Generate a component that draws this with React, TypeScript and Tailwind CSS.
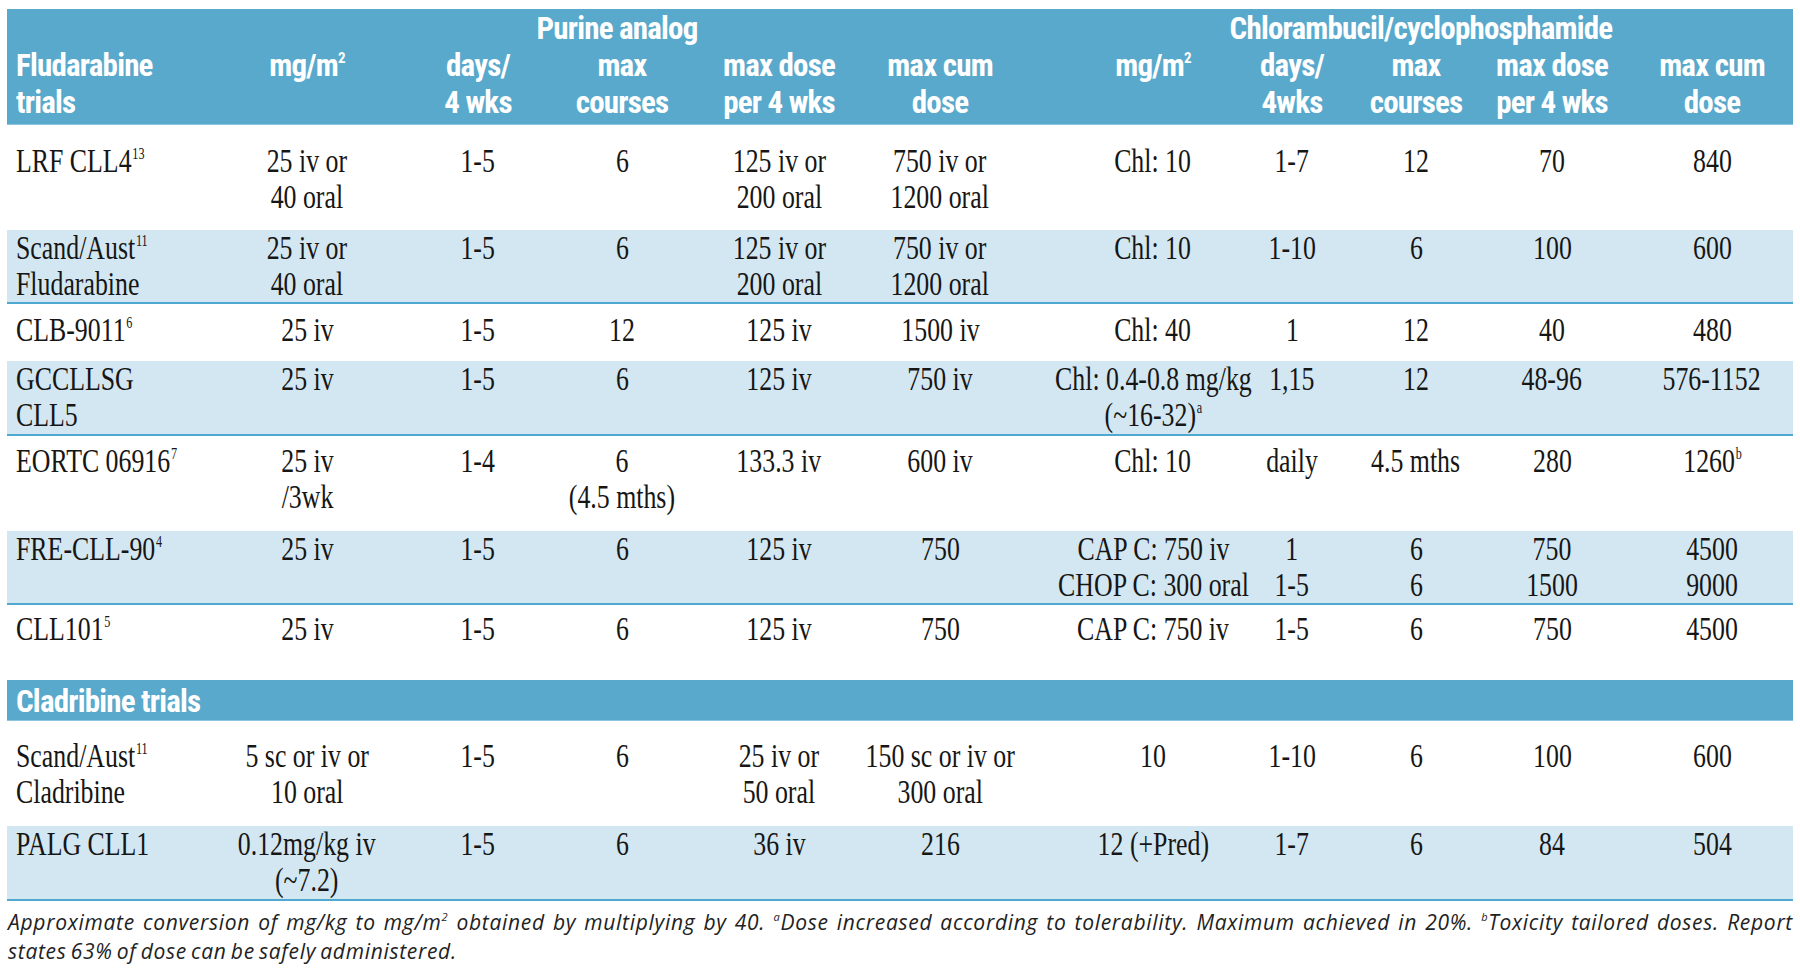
import React from "react";

type Line = React.ReactNode;

interface Row {
  cells: Line[][];
  shaded: boolean;
  height: string;
  pad: string;
}

// column tracks, and the small nudges that put each column's text on the printed centre line
const grid =
  "grid grid-cols-[214px_172px_157px_149px_160px_188px_176px_131px_130px_147px_1fr]";
const nudge = [
  "justify-start pl-[9px]",
  "justify-center",
  "justify-center pl-[13px]",
  "justify-center pr-[5px]",
  "justify-center",
  "justify-center pr-[26px]",
  "justify-center pl-[36px]",
  "justify-center pl-[7px]",
  "justify-center pr-[6px]",
  "justify-center pr-[11px]",
  "justify-center",
];

const Sup = ({ children }: { children: React.ReactNode }) => (
  <sup className="text-[16px] top-[-13px] ml-[1px]">{children}</sup>
);

const fludarabine: Row[] = [
  {
    shaded: false,
    height: "h-[105px]",
    pad: "pt-[18px]",
    cells: [
      [<>LRF CLL4<Sup>13</Sup></>],
      ["25 iv or", "40 oral"],
      ["1-5"],
      ["6"],
      ["125 iv or", "200 oral"],
      ["750 iv or", "1200 oral"],
      ["Chl: 10"],
      ["1-7"],
      ["12"],
      ["70"],
      ["840"],
    ],
  },
  {
    shaded: true,
    height: "h-[74px]",
    pad: "pt-0",
    cells: [
      [<>Scand/Aust<Sup>11</Sup></>, "Fludarabine"],
      ["25 iv or", "40 oral"],
      ["1-5"],
      ["6"],
      ["125 iv or", "200 oral"],
      ["750 iv or", "1200 oral"],
      ["Chl: 10"],
      ["1-10"],
      ["6"],
      ["100"],
      ["600"],
    ],
  },
  {
    shaded: false,
    height: "h-[57px]",
    pad: "pt-[8px]",
    cells: [
      [<>CLB-9011<Sup>6</Sup></>],
      ["25 iv"],
      ["1-5"],
      ["12"],
      ["125 iv"],
      ["1500 iv"],
      ["Chl: 40"],
      ["1"],
      ["12"],
      ["40"],
      ["480"],
    ],
  },
  {
    shaded: true,
    height: "h-[75px]",
    pad: "pt-0",
    cells: [
      ["GCCLLSG", "CLL5"],
      ["25 iv"],
      ["1-5"],
      ["6"],
      ["125 iv"],
      ["750 iv"],
      ["Chl: 0.4-0.8 mg/kg", <>(~16-32)<Sup>a</Sup></>],
      ["1,15"],
      ["12"],
      ["48-96"],
      ["576-1152"],
    ],
  },
  {
    shaded: false,
    height: "h-[95px]",
    pad: "pt-[7px]",
    cells: [
      [<>EORTC 06916<Sup>7</Sup></>],
      ["25 iv", "/3wk"],
      ["1-4"],
      ["6", "(4.5 mths)"],
      ["133.3 iv"],
      ["600 iv"],
      ["Chl: 10"],
      ["daily"],
      ["4.5 mths"],
      ["280"],
      [<>1260<Sup>b</Sup></>],
    ],
  },
  {
    shaded: true,
    height: "h-[74px]",
    pad: "pt-0",
    cells: [
      [<>FRE-CLL-90<Sup>4</Sup></>],
      ["25 iv"],
      ["1-5"],
      ["6"],
      ["125 iv"],
      ["750"],
      ["CAP C: 750 iv", "CHOP C: 300 oral"],
      ["1", "1-5"],
      ["6", "6"],
      ["750", "1500"],
      ["4500", "9000"],
    ],
  },
  {
    shaded: false,
    height: "h-[75px]",
    pad: "pt-[6px]",
    cells: [
      [<>CLL101<Sup>5</Sup></>],
      ["25 iv"],
      ["1-5"],
      ["6"],
      ["125 iv"],
      ["750"],
      ["CAP C: 750 iv"],
      ["1-5"],
      ["6"],
      ["750"],
      ["4500"],
    ],
  },
];

const cladribine: Row[] = [
  {
    shaded: false,
    height: "h-[105px]",
    pad: "pt-[17px]",
    cells: [
      [<>Scand/Aust<Sup>11</Sup></>, "Cladribine"],
      ["5 sc or iv or", "10 oral"],
      ["1-5"],
      ["6"],
      ["25 iv or", "50 oral"],
      ["150 sc or iv or", "300 oral"],
      ["10"],
      ["1-10"],
      ["6"],
      ["100"],
      ["600"],
    ],
  },
  {
    shaded: true,
    height: "h-[75px]",
    pad: "pt-0",
    cells: [
      ["PALG CLL1"],
      ["0.12mg/kg iv", "(~7.2)"],
      ["1-5"],
      ["6"],
      ["36 iv"],
      ["216"],
      ["12 (+Pred)"],
      ["1-7"],
      ["6"],
      ["84"],
      ["504"],
    ],
  },
];

const heads: Line[][] = [
  ["Fludarabine", "trials"],
  [<>mg/m<sup className="text-[15px] top-[-13px]">2</sup></>],
  ["days/", "4 wks"],
  ["max", "courses"],
  ["max dose", "per 4 wks"],
  ["max cum", "dose"],
  [<>mg/m<sup className="text-[15px] top-[-13px]">2</sup></>],
  ["days/", "4wks"],
  ["max", "courses"],
  ["max dose", "per 4 wks"],
  ["max cum", "dose"],
];

const headFont =
  "[font-family:'Roboto_Condensed','Open_Sans',sans-serif] font-bold text-white text-[31px] leading-[37px] tracking-[-0.8px]";

function BodyRow({ row }: { row: Row }) {
  return (
    <div
      className={`${grid} ${row.height} ${row.pad} ${
        row.shaded ? "bg-[#d3e7f3] border-b-2 border-[#4ea8d0]" : "bg-white"
      }`}
    >
      {row.cells.map((lines, i) => (
        <div key={i} className={`flex min-w-0 ${nudge[i]}`}>
          <div
            className={`flex flex-col whitespace-nowrap scale-x-[0.76] ${
              i === 0 ? "items-start origin-left" : "items-center"
            }`}
          >
            {lines.map((line, j) => (
              <div key={j} className="h-[36px]">
                {line}
              </div>
            ))}
          </div>
        </div>
      ))}
    </div>
  );
}

const Note = ({ children }: { children: React.ReactNode }) => (
  <sup className="text-[11px] top-[-9px]">{children}</sup>
);

export default function App() {
  return (
    <div className="min-h-[979px] bg-white pt-[9px]">
      <div className="mx-[7px]">
        <div className={`bg-[#59a9cc] h-[116px] pt-[1px] border-b border-[#8ac4de] ${headFont}`}>
          <div className={grid}>
            <div className="col-start-4 flex min-w-0 justify-center pr-[15px] whitespace-nowrap">
              Purine analog
            </div>
            <div className="col-start-9 flex min-w-0 justify-center pl-[4px] whitespace-nowrap">
              Chlorambucil/cyclophosphamide
            </div>
          </div>
          <div className={grid}>
            {heads.map((lines, i) => (
              <div key={i} className={`flex min-w-0 ${nudge[i]}`}>
                <div
                  className={`flex flex-col whitespace-nowrap ${
                    i === 0 ? "items-start" : "items-center"
                  }`}
                >
                  {lines.map((line, j) => (
                    <div key={j}>{line}</div>
                  ))}
                </div>
              </div>
            ))}
          </div>
        </div>

        <div className="[font-family:'Liberation_Serif','Times_New_Roman',serif] text-[34px] leading-[36px] text-[#161615]">
          {fludarabine.map((row, i) => (
            <BodyRow key={i} row={row} />
          ))}

          <div
            className={`bg-[#59a9cc] h-[41px] pt-[3px] pl-[9px] border-b border-[#8ac4de] ${headFont}`}
          >
            Cladribine trials
          </div>

          {cladribine.map((row, i) => (
            <BodyRow key={i} row={row} />
          ))}
        </div>

        <div className="pt-[7px] pl-[1px] [font-family:'Open_Sans',sans-serif] italic text-[21px] leading-[29px] tracking-[0.7px] [word-spacing:-2px] text-[#222]">
          <p className="text-justify [text-align-last:justify] whitespace-nowrap">
            Approximate conversion of mg/kg to mg/m<Note>2</Note> obtained by multiplying
            by 40. <Note>a</Note>Dose increased according to tolerability. Maximum
            achieved in 20%. <Note>b</Note>Toxicity tailored doses. Report
          </p>
          <p>states 63% of dose can be safely administered.</p>
        </div>
      </div>
    </div>
  );
}
